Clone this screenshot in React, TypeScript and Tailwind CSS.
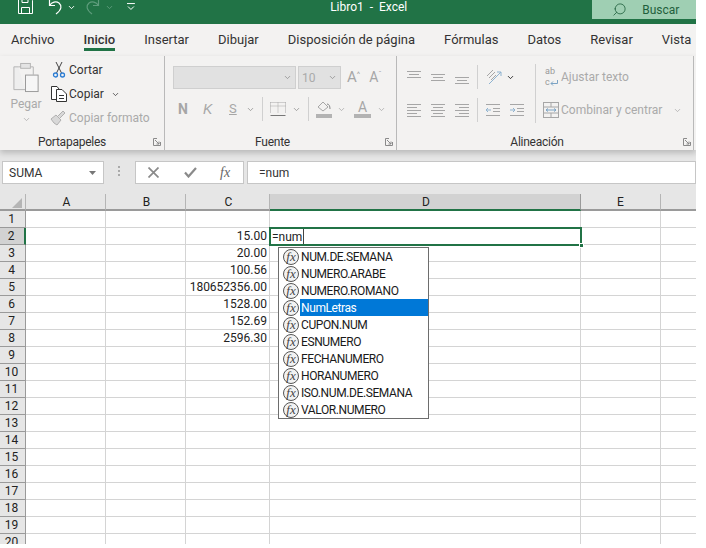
import { ChevronDown, Search } from 'lucide-react';

const rows = Array.from({ length: 20 }, (_, i) => i + 1);

const values: Record<number, string> = {
  2: '15.00',
  3: '20.00',
  4: '100.56',
  5: '180652356.00',
  6: '1528.00',
  7: '152.69',
  8: '2596.30',
};

const suggestions = [
  'NUM.DE.SEMANA',
  'NUMERO.ARABE',
  'NUMERO.ROMANO',
  'NumLetras',
  'CUPON.NUM',
  'ESNUMERO',
  'FECHANUMERO',
  'HORANUMERO',
  'ISO.NUM.DE.SEMANA',
  'VALOR.NUMERO',
];

const tabs = ['Archivo', 'Inicio', 'Insertar', 'Dibujar', 'Disposición de página', 'Fórmulas', 'Datos', 'Revisar', 'Vista'];

function Caret({ className = 'text-[#8a8a8a]' }: { className?: string }) {
  return <ChevronDown className={`h-[9px] w-[9px] shrink-0 ${className}`} strokeWidth={2} />;
}

function Launcher() {
  return (
    <svg width="8" height="8" viewBox="0 0 8 8" fill="none" stroke="#8a8a8a">
      <path d="M7.500 4V7.500H.5V.5H4" />
      <path d="M2 2L6 6M6 3.500V6H3.500" />
    </svg>
  );
}

// horizontal lines used by all the alignment buttons
function Lines({ lines }: { lines: [number, number, number][] }) {
  return (
    <svg width="16" height="16" viewBox="0 0 16 16" stroke="#a6a6a6">
      {lines.map(([y, a, b]) => (
        <path key={y} d={`M${a} ${y + 0.5}H${b}`} />
      ))}
    </svg>
  );
}

function Indent({ flip }: { flip?: boolean }) {
  return (
    <svg width="16" height="16" viewBox="0 0 16 16" fill="none" stroke="#a6a6a6">
      <path d="M1 2.500H15M8 6.500H15M8 9.500H15M1 13.500H15" />
      <path d={flip ? 'M1 8H6M4 6L6 8L4 10' : 'M1 8H6M3 6L1 8L3 10'} stroke="#8fb3d0" />
    </svg>
  );
}

function VSep({ h = 'h-[24px]' }: { h?: string }) {
  return <div className={`w-px bg-[#d0d0d0] ${h}`} />;
}

function RibbonGroup({
  label,
  width,
  launcher,
  labelClass,
  children,
}: {
  label: string;
  width: string;
  launcher: string;
  labelClass: string;
  children: React.ReactNode;
}) {
  return (
    <div className={`relative flex shrink-0 flex-col border-r border-[#b9b9b9] ${width}`}>
      <div className="h-[78px]">{children}</div>
      <div className={`flex h-[16px] items-center justify-center text-[12px] tracking-[-0.25px] text-[#333] ${labelClass}`}>{label}</div>
      <div className={`absolute bottom-[4px] flex ${launcher}`}>
        <Launcher />
      </div>
    </div>
  );
}

function Clipboard() {
  return (
    <div className="flex pl-[11px]">
      <div className="flex w-[30px] flex-col items-center pt-[6px] text-[#aaa]">
        <svg width="28" height="31" viewBox="0 0 28 32" fill="none" stroke="#b4b4b4">
          <path d="M6 5H1.500V28.500H13" fill="#eee" />
          <path d="M6 5H21.500V13" />
          <rect x="8.500" y="1.500" width="10" height="5" fill="#e4e4e4" />
          <rect x="13.500" y="13.500" width="13" height="17" fill="#f6f6f6" stroke="#999" />
        </svg>
        <span className="mt-[4px] text-[12px] leading-[14px]">Pegar</span>
        <Caret className="mt-[4px] text-[#aaa]" />
      </div>
      <div className="ml-[9px] flex flex-col pt-[2px] text-[12px] leading-[24px]">
        <div className="flex h-[24px] items-center gap-[2px] text-[#333]">
          <svg width="16" height="18" viewBox="0 0 16 18" fill="none" className="ml-[1px]">
            <path d="M5 1L10.500 12M11 1L5.500 12" stroke="#444" />
            <circle cx="4.500" cy="14" r="2" stroke="#2b7cd3" strokeWidth="1.300" />
            <circle cx="11.500" cy="14" r="2" stroke="#2b7cd3" strokeWidth="1.300" />
          </svg>
          Cortar
        </div>
        <div className="flex h-[24px] items-center gap-[2px] text-[#333]">
          <svg width="16" height="16" viewBox="0 0 16 16" fill="#fff" stroke="#333" className="ml-[1px]">
            <path d="M5.500 13.500H.5V.5H6L8 3" />
            <path d="M5.500 3.500H11L15.500 8V15.500H5.500Z" />
            <path d="M8 9.500H13M8 12.500H13" fill="none" />
          </svg>
          <span>Copiar</span>
          <Caret className="ml-[5px] text-[#333]" />
        </div>
        <div className="flex h-[24px] items-center gap-[3px] text-[#aaa]">
          <svg width="16" height="16" viewBox="0 0 16 16" fill="#d8d8d8" stroke="#b0b0b0">
            <path d="M1 9L6 5L11 10L7 15L4 13Z" />
            <path d="M8 6L13 1L15 3L10 8" />
          </svg>
          Copiar formato
        </div>
      </div>
    </div>
  );
}

function Font() {
  return (
    <div className="flex flex-col pl-[8px] pt-[10px]">
      <div className="flex h-[23px] items-center">
        <div className="flex h-[23px] w-[123px] items-center justify-end border border-[#cfcfcf] bg-[#e1e1e1] pr-[3px]">
          <Caret />
        </div>
        <div className="ml-[2px] flex h-[23px] w-[43px] items-center justify-between border border-[#cfcfcf] bg-[#e1e1e1] px-[3px] text-[12px] text-[#aaa]">
          10
          <Caret />
        </div>
        <span className="ml-[6px] text-[15px] text-[#a6a6a6]">A</span>
        <span className="mb-[5px] text-[8px] text-[#a6a6a6]">^</span>
        <span className="ml-[9px] text-[14px] text-[#a6a6a6]">A</span>
        <span className="mb-[5px] text-[8px] text-[#a6a6a6]">ˇ</span>
      </div>
      <div className="mt-[8px] flex h-[24px] items-center text-[#a6a6a6]">
        <span className="ml-[5px] w-[25px] shrink-0 text-[14px] font-bold">N</span>
        <span className="w-[26px] shrink-0 font-['Liberation_Sans',sans-serif] text-[14px] italic">K</span>
        <span className="w-[17px] shrink-0 text-[13px] underline">S</span>
        <Caret />
        <div className="ml-[7px] mr-[7px]">
          <VSep />
        </div>
        <svg width="16" height="16" viewBox="0 0 16 16" fill="none" stroke="#a6a6a6">
          <path d="M.5 1.500H15.500M.5 5H15.500M8 1.500V12M.5 1.500V12M15.500 1.500V12" strokeDasharray="1 1" />
          <path d="M.5 14.500H15.500" stroke="#777" />
        </svg>
        <Caret className="ml-[6px] text-[#8a8a8a]" />
        <div className="ml-[7px] mr-[7px]">
          <VSep />
        </div>
        <svg width="16" height="18" viewBox="0 0 16 18" fill="none" stroke="#a6a6a6">
          <path d="M2 7L7 2L12 7L7 11Z" />
          <path d="M11 4C13 4 14 6 14 9" stroke="#888" />
          <rect x="0" y="14" width="16" height="4" fill="#b3b3b3" stroke="none" />
        </svg>
        <Caret className="ml-[5px]" />
        <div className="ml-[8px] flex w-[17px] flex-col items-center">
          <span className="text-[14px] leading-[14px]">A</span>
          <div className="h-[4px] w-[17px] bg-[#b3b3b3]" />
        </div>
        <Caret className="ml-[6px]" />
      </div>
    </div>
  );
}

function Alignment() {
  return (
    <div className="flex pl-[9px] pt-[8px]">
      <div className="flex flex-col">
        <div className="flex h-[26px] items-center gap-[8px]">
          <Lines lines={[[2, 1, 15], [5, 3, 13], [8, 1, 15]]} />
          <Lines lines={[[5, 1, 15], [8, 3, 13], [11, 1, 15]]} />
          <Lines lines={[[8, 1, 15], [11, 3, 13], [14, 1, 15]]} />
        </div>
        <div className="mt-[7px] flex h-[26px] items-center gap-[8px]">
          <Lines lines={[[2, 1, 15], [5, 1, 11], [8, 1, 15], [11, 1, 11], [14, 1, 15]]} />
          <Lines lines={[[2, 1, 15], [5, 3, 13], [8, 1, 15], [11, 3, 13], [14, 1, 15]]} />
          <Lines lines={[[2, 1, 15], [5, 5, 15], [8, 1, 15], [11, 5, 15], [14, 1, 15]]} />
        </div>
      </div>
      <div className="ml-[7px] flex flex-col">
        <div className="flex h-[26px] items-center">
          <VSep />
          <svg width="18" height="18" viewBox="0 0 18 18" fill="none" stroke="#a6a6a6" className="ml-[7px]">
            <path d="M2 8L8 2M4 10L10 4M6 12L11 7" />
            <path d="M4 16L16 4M12 4H16V8" stroke="#8fb3d0" />
          </svg>
          <Caret className="ml-[3px]" />
        </div>
        <div className="mt-[7px] flex h-[26px] items-center gap-[8px]">
          <VSep />
          <div className="ml-[-1px] flex gap-[8px]">
            <Indent />
            <Indent flip />
          </div>
        </div>
      </div>
      <div className="ml-[10px] flex flex-col text-[12px] text-[#aaa]">
        <div className="flex h-[26px] items-center">
          <div className="h-[26px] w-px bg-[#d0d0d0]" />
          <div className="ml-[9px] mr-[1px] flex w-[15px] shrink-0 flex-col text-[9px] leading-[11px] text-[#999]">
            <span>ab</span>
            <div className="flex items-center">
              <span>c</span>
              <svg width="9" height="8" viewBox="0 0 9 8" fill="none" stroke="#7ba3c4">
                <path d="M1 4.500H7.500V1M1 4.500L3 2.500M1 4.500L3 6.500" />
              </svg>
            </div>
          </div>
          Ajustar texto
        </div>
        <div className="mt-[7px] flex h-[26px] items-center">
          <div className="mb-[7px] h-[33px] w-px bg-[#d0d0d0]" />
          <svg width="16" height="16" viewBox="0 0 16 16" fill="none" stroke="#a6a6a6" className="ml-[7px] mr-[2px]">
            <rect x=".5" y=".5" width="15" height="15" />
            <path d="M.5 5H15.500M.5 11H15.500M8 .5V5M8 11V15.500" />
            <path d="M3 8H13M5 6.500L3 8L5 9.500M11 6.500L13 8L11 9.500" stroke="#7ba3c4" />
          </svg>
          Combinar y centrar
          <Caret className="ml-[11px]" />
        </div>
      </div>
    </div>
  );
}

function FxIcon() {
  return (
    <div className="flex h-[16px] w-[16px] shrink-0 items-center justify-center rounded-full border-[1.5px] border-[#555] bg-[#f2f2f2] font-['Liberation_Serif',serif] text-[13px] italic leading-none tracking-normal text-[#444]">
      fx
    </div>
  );
}

export default function App() {
  return (
    <div className="h-[548px] w-[706px] overflow-hidden bg-white font-['Roboto',sans-serif]">
      <div className="h-[544px] w-[696px] overflow-hidden">
        {/* title bar */}
        <div className="flex h-[24px] items-start bg-[#217346] text-[12px] text-white">
          <div className="flex w-[140px] items-center pl-[18px]">
            <svg width="15" height="16" viewBox="0 0 15 16" fill="none" stroke="#fff" className="mt-[-1px]">
              <path d="M.5 -1H12L14.500 1.500V14.500H.5Z" />
              <path d="M3.500 14V8.500H11.500V14M4 -1V3.500H10V-1" />
            </svg>
            <svg width="16" height="16" viewBox="0 0 16 16" fill="none" stroke="#fff" strokeWidth="1.200" className="ml-[15px] mt-[-2px]">
              <path d="M1.500 1V6.500H7M1.500 6.500C4 3 8 2 11 4C14 6.500 14 10.500 8 15" />
            </svg>
            <ChevronDown className="ml-[3px] h-[9px] w-[9px]" strokeWidth={2.500} />
            <svg width="16" height="16" viewBox="0 0 16 16" fill="none" stroke="#5e9c7c" strokeWidth="1.200" className="ml-[8px] mt-[-2px]">
              <path d="M14.500 1V6.500H9M14.500 6.500C12 3 8 2 5 4C2 6.500 2 10.500 8 15" />
            </svg>
            <ChevronDown className="ml-[5px] h-[9px] w-[9px] text-[#5e9c7c]" strokeWidth={2.500} />
          </div>
          <svg width="8" height="8" viewBox="0 0 8 8" fill="none" stroke="#fff" className="ml-[-11px] mt-[3px]">
            <path d="M0 .5H8M1 3.500L4 6.500L7 3.500" />
          </svg>
          <div className="ml-[195px] flex h-[14px] w-[77px] items-center justify-center whitespace-pre">Libro1  -  Excel</div>
          <div className="ml-[185px] flex h-[19px] w-[105px] items-center bg-[#9fcfb3] pl-[20px] text-[#1f5f3c]">
            <Search className="h-[15px] w-[15px] -scale-x-100" strokeWidth={1.300} />
            <span className="ml-[15px]">Buscar</span>
          </div>
        </div>

        {/* tabs */}
        <div className="flex h-[32px] bg-[#f3f2f1] pl-[11px] text-[13px] text-[#333]">
          {tabs.map((tab) => (
            <div
              key={tab}
              className={`mr-[29px] flex h-[27px] shrink-0 items-center border-b-[3px] pt-[7px] last:mr-0 ${
                tab === 'Inicio' ? 'border-[#217346] font-medium' : 'border-transparent'
              }`}
            >
              {tab}
            </div>
          ))}
        </div>

        {/* ribbon */}
        <div className="relative z-10 flex h-[94px] bg-[#f3f2f1] shadow-[0_3px_6px_rgba(0,0,0,0.2)]">
          <RibbonGroup label="Portapapeles" width="w-[165px]" launcher="right-[3px]" labelClass="pr-[20px]">
            <Clipboard />
          </RibbonGroup>
          <RibbonGroup label="Fuente" width="w-[232px]" launcher="right-[3px]" labelClass="pr-[16px]">
            <Font />
          </RibbonGroup>
          <RibbonGroup label="Alineación" width="w-[297px]" launcher="right-[2px]" labelClass="pr-[16px]">
            <Alignment />
          </RibbonGroup>
        </div>

        {/* formula bar */}
        <div className="flex h-[44px] items-start bg-[#e6e6e6] pt-[11px] text-[12px] text-[#333]">
          <div className="ml-[2px] flex h-[23px] w-[102px] items-center justify-between border border-[#c6c6c6] bg-white pl-[6px] pr-[7px]">
            SUMA
            <svg width="7" height="4" viewBox="0 0 7 4" fill="#777">
              <path d="M0 0H7L3.500 4Z" />
            </svg>
          </div>
          <div className="ml-[14px] mt-[5px] flex w-[3px] flex-col gap-[2px]">
            <div className="h-[2px] w-[2px] bg-[#aaa]" />
            <div className="h-[2px] w-[2px] bg-[#aaa]" />
            <div className="h-[2px] w-[2px] bg-[#aaa]" />
          </div>
          <div className="ml-[14px] flex h-[23px] w-[109px] items-center border border-[#c6c6c6] bg-white pl-[12px]">
            <svg width="11" height="11" viewBox="0 0 11 11" fill="none" stroke="#8a8a8a" strokeWidth="1.700">
              <path d="M.5 .5L10.500 10.500M10.500 .5L.5 10.500" />
            </svg>
            <svg width="13" height="11" viewBox="0 0 13 11" fill="none" stroke="#8a8a8a" strokeWidth="2.200" className="ml-[25px]">
              <path d="M1 5.500L4.500 9.500L12 1" />
            </svg>
            <span className="ml-[23px] font-['Liberation_Serif',serif] text-[14px] italic text-[#666]">fx</span>
          </div>
          <div className="ml-[3px] flex h-[23px] flex-1 items-center border border-[#c6c6c6] bg-white pl-[11px]">=num</div>
        </div>

        {/* sheet */}
        <div className="relative bg-white text-[12px] leading-[15px] text-[#222]">
          <div className="grid h-[17px] grid-cols-[26px_80px_80px_84px_311px_80px_1fr] grid-rows-[17px] bg-[#e6e6e6]">
            <div className="flex items-end justify-end border-b-2 border-r border-[#9a9a9a] border-r-[#b5b5b5] pb-[1px] pr-[3px]">
              <svg width="10" height="10" viewBox="0 0 10 10" fill="#b5b5b5">
                <path d="M10 0V10H0Z" />
              </svg>
            </div>
            {['A', 'B', 'C'].map((col) => (
              <div key={col} className="flex items-center justify-center border-b-2 border-r border-[#9a9a9a] border-r-[#b5b5b5] pl-[2px] pt-[1px]">
                {col}
              </div>
            ))}
            <div className="flex items-center justify-center border-b-2 border-r border-[#217346] border-r-[#9a9a9a] bg-[#d2d2d2] pl-[2px] pt-[1px]">D</div>
            <div className="flex items-center justify-center border-b-2 border-r border-[#9a9a9a] border-r-[#b5b5b5] pt-[1px]">E</div>
            <div className="border-b-2 border-[#9a9a9a]" />
          </div>
          {rows.map((row) => (
            <div key={row} className="grid h-[17px] grid-cols-[26px_80px_80px_84px_311px_80px_1fr] grid-rows-[17px]">
              <div
                className={`flex items-center justify-center border-b border-r border-[#9a9a9a] pr-[2px] pt-[1px] ${
                  row === 2 ? 'border-r-2 border-r-[#217346] bg-[#d2d2d2]' : 'bg-[#e6e6e6]'
                }`}
              >
                {row}
              </div>
              <div className="border-b border-r border-[#d4d4d4]" />
              <div className="border-b border-r border-[#d4d4d4]" />
              <div className="flex items-center justify-end border-b border-r border-[#d4d4d4] pr-[2px] pt-[1px]">{values[row]}</div>
              <div className="border-b border-r border-[#d4d4d4]" />
              <div className="border-b border-r border-[#d4d4d4]" />
              <div className="border-b border-[#d4d4d4]" />
            </div>
          ))}

          {/* active cell */}
          <div className="absolute left-[269px] top-[33px] flex h-[19px] w-[313px] items-center border-2 border-[#217346] bg-white pl-[1px]">
            <span className="pt-[1px]">=num</span>
            <div className="ml-[1px] h-[15px] w-px bg-[#444]" />
          </div>
          <div className="absolute left-[579px] top-[49px] h-[5px] w-[5px] border border-white bg-[#217346]" />

          {/* autocomplete */}
          <div className="absolute left-[278px] top-[53px] w-[151px] border border-[#6d6d6d] bg-white text-[12px] tracking-[-0.4px] text-[#1a1a1a]">
            {suggestions.map((name) => (
              <div key={name} className="flex h-[17px] items-center pl-[4px]">
                <FxIcon />
                <div className={`ml-[1px] flex h-[17px] flex-1 items-center pl-[1px] pt-[1px] ${name === 'NumLetras' ? 'bg-[#0078d7] text-white' : ''}`}>
                  {name}
                </div>
              </div>
            ))}
          </div>
        </div>
      </div>
    </div>
  );
}
